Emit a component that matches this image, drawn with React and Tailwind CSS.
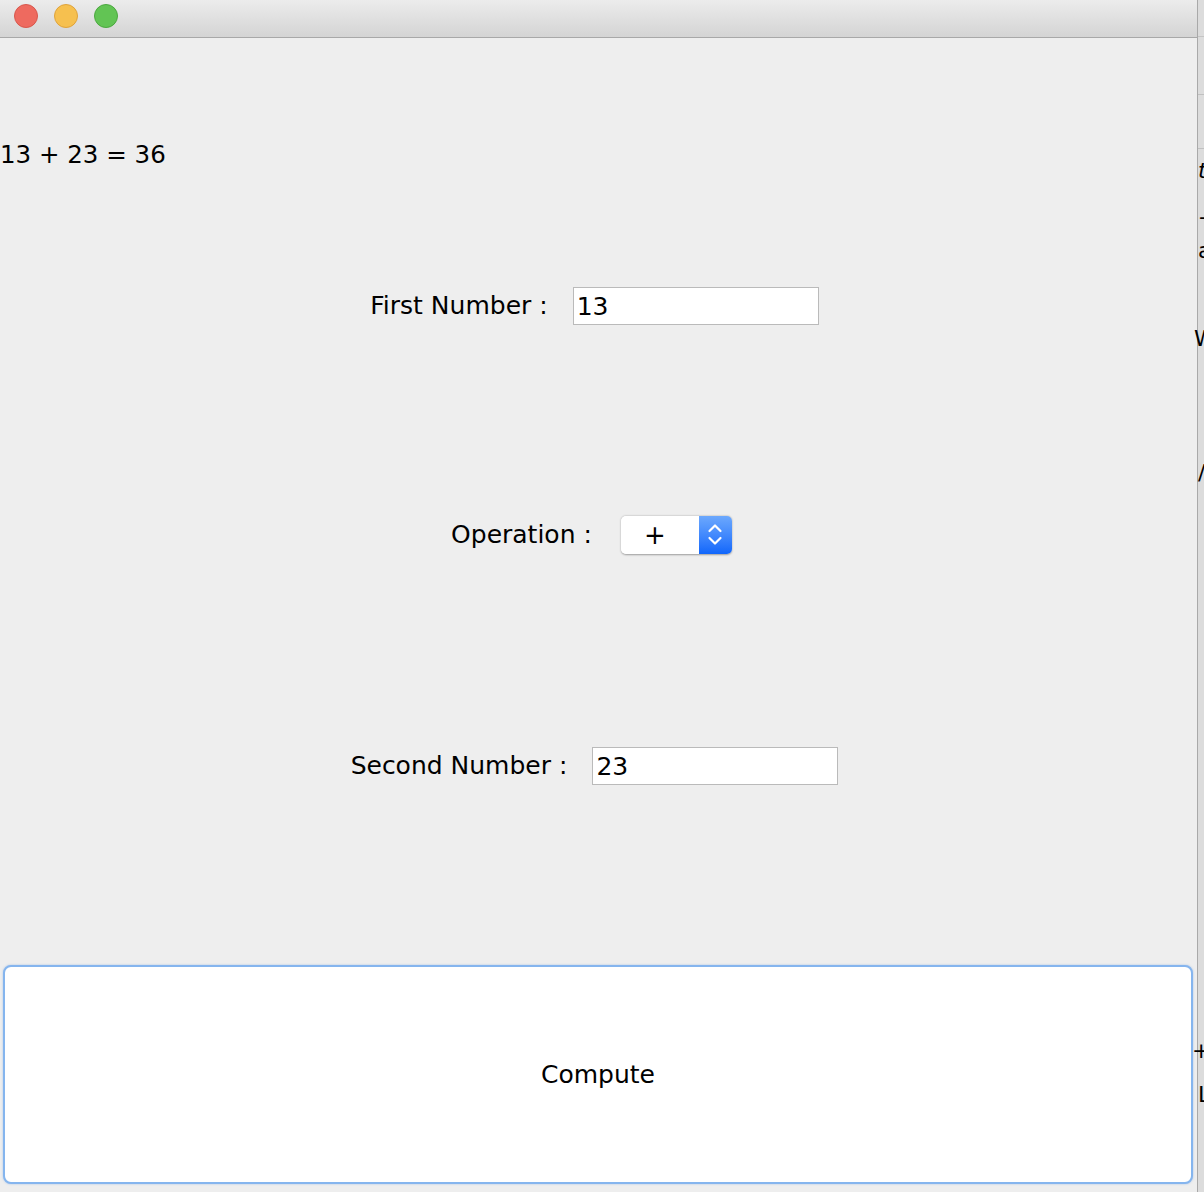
import React from 'react'

const font = { fontFamily: '"DejaVu Sans", "Liberation Sans", sans-serif' }

const TrafficLights = () => (
  <div className="flex items-center gap-4 pl-[14px] pt-1">
    <div className="w-6 h-6 rounded-full bg-[#ee6a5f] border border-[#d8574c]" />
    <div className="w-6 h-6 rounded-full bg-[#f6c04f] border border-[#dfa33b]" />
    <div className="w-6 h-6 rounded-full bg-[#62c454] border border-[#4ba83f]" />
  </div>
)

const Field = ({ label, value }) => (
  <div className="h-[230px] flex justify-center items-start pt-[19px] pr-[8px]">
    <div className="flex items-center gap-[25px]">
      <span className="text-[25px] leading-[38px] text-black">{label}</span>
      <div className="w-[246px] h-[38px] bg-white border border-[#bababa] flex items-center pl-[3px] pt-[1px] text-[25px] text-black">
        {value}
      </div>
    </div>
  </div>
)

const OperationSelect = () => (
  <div className="h-[230px] flex justify-center items-start pt-[18px] pr-[14px]">
    <div className="flex items-center gap-[29px]">
      <span className="text-[25px] leading-[38px] text-black">Operation :</span>
      <div className="flex h-[38px] w-[111px] rounded-[5px] shadow-[0_0.5px_2px_rgba(0,0,0,0.35)] overflow-hidden">
        <div className="flex-1 bg-white flex items-center justify-center pr-[10px] text-[26px] text-black">+</div>
        <div className="w-[33px] bg-gradient-to-b from-[#6ca8fd] to-[#0f66fb] flex items-center justify-center">
          <svg width="16" height="28" viewBox="0 0 16 28" fill="none" stroke="white" strokeWidth="2.2" strokeLinecap="round" strokeLinejoin="round">
            <path d="M2.5 10 L8 4.5 L13.5 10" />
            <path d="M2.5 17 L8 22.5 L13.5 17" />
          </svg>
        </div>
      </div>
    </div>
  </div>
)

const App = () => {
  return (
    <div className="w-[1204px] h-[1192px] flex bg-[#dadada] overflow-hidden" style={font}>
      <div className="w-[1198px] h-full flex flex-col bg-[#eeeeee] border-r border-[#a9a9a9]">
        <div className="h-[38px] shrink-0 bg-gradient-to-b from-[#ececec] to-[#d4d4d4] border-b border-[#a8a8a8]">
          <TrafficLights />
        </div>

        <div className="h-[230px] flex items-center pt-[5px]">
          <span className="text-[24.5px] text-black">13 + 23 = 36</span>
        </div>

        <Field label="First Number :" value="13" />
        <OperationSelect />
        <Field label="Second Number :" value="23" />

        <div className="flex-1 pt-[7px] pb-[8px] pl-[3px] pr-[4px] flex">
          <button className="flex-1 bg-white rounded-[8px] border-2 border-[#85b5ee] shadow-[0_0_2px_rgba(90,150,230,0.5)] flex items-center justify-center text-[25px] text-black">
            Compute
          </button>
        </div>
      </div>

      <div className="flex-1 relative bg-[#dcdcdc] text-black text-[22px] leading-none">
        <div className="h-[37px] bg-[#dcdcdc] border-b border-[#c4c4c4]" />
        <div className="absolute top-[94px] left-0 w-full border-t border-[#c0c0c0]" />
        <div className="absolute top-[148px] left-0 w-full border-t border-[#c0c0c0]" />
        <span className="absolute top-[160px] left-0 italic">t</span>
        <span className="absolute top-[206px] left-[1px]">-</span>
        <span className="absolute top-[240px] left-0">a</span>
        <span className="absolute top-[328px] left-[-4px]">W</span>
        <span className="absolute top-[462px] left-0">/</span>
        <span className="absolute top-[1040px] left-[-6px]">+</span>
        <span className="absolute top-[1084px] left-0">L</span>
      </div>
    </div>
  )
}

export default App
